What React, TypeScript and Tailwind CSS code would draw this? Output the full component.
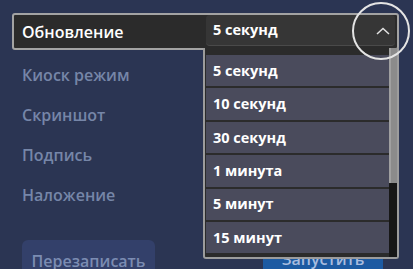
const options = ["5 секунд", "10 секунд", "30 секунд", "1 минута", "5 минут", "15 минут"];

const labels = ["Киоск режим", "Скриншот", "Подпись", "Наложение"];

export default function App() {
  return (
    <div
      className="relative w-[413px] h-[269px] overflow-hidden bg-[#2b3553] pt-[13px] pl-[12px]"
      style={{ fontFamily: '"Open Sans", "Noto Sans", sans-serif' }}
    >
      {/* selected settings row */}
      <div className="flex w-[387px] h-[37px] border-2 border-[#a3a3a3] rounded-[3px] bg-[#2b2b2b]">
        <div className="w-[192px] pl-[8px] flex items-center text-[16px] font-semibold text-white">
          Обновление
        </div>
        <div className="relative w-[189px] h-[31px] rounded-[4px] bg-[#363636] border-b border-[#4a4a4a] flex items-center pl-[7px] text-[14.5px] font-bold text-white">
          5 секунд
          <svg className="absolute right-[5px] top-[12px]" width="14" height="8" viewBox="0 0 14 8" fill="none">
            <path d="M1 7 L7 1.5 L13 7" stroke="#e2e2e2" strokeWidth="1.5" />
          </svg>
        </div>
      </div>

      <div className="mt-[5px] pl-[10px] flex flex-col">
        {labels.map((l) => (
          <div key={l} className="h-[40px] flex items-center text-[16px] font-semibold text-[#7686a8]">
            {l}
          </div>
        ))}
      </div>

      <div className="mt-[25px] pl-[10px] flex">
        <div className="w-[133px] h-[36px] rounded-md bg-[#33406a] flex justify-center pt-[9px] text-[16px] font-semibold text-[#7b8cb2]">
          Перезаписать
        </div>
        <div className="ml-[108px] w-[120px] h-[36px] bg-[#1c5aa2] flex justify-center pt-[7px] text-[16px] font-semibold text-[#a9bddf]">
          Запустить
        </div>
      </div>

      {/* open dropdown list */}
      <div className="absolute left-[203px] top-[48px] w-[196px] h-[211px] border-x-2 border-b-2 border-[#9c9c9c] rounded-b-[3px] bg-[#2b2b2b] flex pt-[7px] pl-[1px]">
        <div className="flex-1 flex flex-col">
          {options.map((o) => (
            <div
              key={o}
              className="h-[33.4px] shrink-0 border-b-2 border-[#2b2b2b] bg-[#4a4b5c] flex items-center pl-[7px] text-[14.5px] font-bold text-white"
            >
              {o}
            </div>
          ))}
        </div>
        <div className="w-[8px] -mt-[7px] flex flex-col">
          <div className="h-[135px] bg-[#8b8b8b] border-l-2 border-[#a0a0a0]" />
          <div className="flex-1 bg-[#171717]" />
        </div>
      </div>

      {/* highlight circle */}
      <div className="absolute left-[352px] top-[2px] w-[58px] h-[58px] rounded-full border-2 border-[#e4e4e4]" />
    </div>
  );
}
